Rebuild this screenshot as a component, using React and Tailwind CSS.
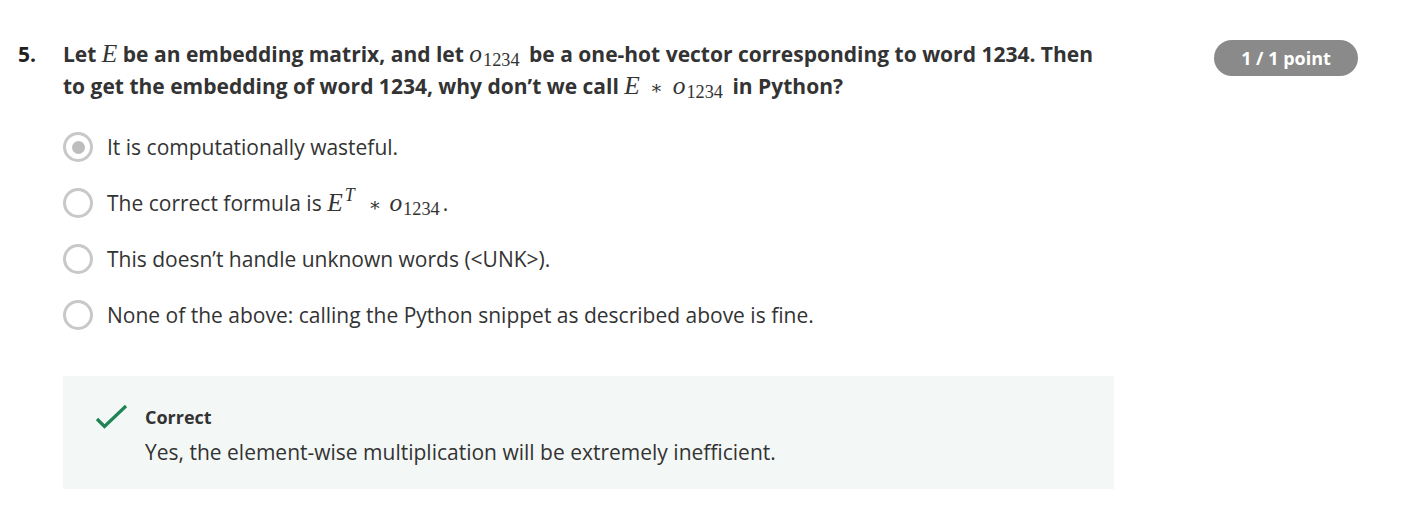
import React from 'react';

const MathO = ({ className = '' }) => (
    <span className={`inline-block whitespace-nowrap font-['Liberation_Serif',serif] text-[1.21em] font-normal leading-none ${className}`}>
        <span className="italic">o</span>
        <span className="inline-block align-[-0.22em] pl-[1px] text-[0.72em]">1234</span>
    </span>
);

const MathE = ({ sup, className = '' }) => (
    <span className={`inline-block font-['Liberation_Serif',serif] text-[1.21em] font-normal italic leading-none ${className}`}>
        E{sup && <span className="inline-block align-[0.55em] pl-[2px] text-[0.7em]">{sup}</span>}
    </span>
);

const Star = ({ className }) => (
    <span className={`inline-block font-['DejaVu_Serif',serif] text-[0.9em] font-normal leading-none ${className}`}>∗</span>
);

const Radio = ({ checked }) => (
    <span className="flex h-[30px] w-[30px] shrink-0 items-center justify-center rounded-full border-[3px] border-[#c8c8c8] bg-white">
        {checked && <span className="h-[13px] w-[13px] rounded-full bg-[#bdbdbd]"></span>}
    </span>
);

const options = [
    { id: 1, checked: true, content: <>It is computationally wasteful.</> },
    {
        id: 2,
        content: (
            <>
                The correct formula is <MathE sup="T" />
                <Star className="ml-[14px] mr-[8px]" />
                <MathO />
                <span className="ml-[3px]">.</span>
            </>
        ),
    },
    { id: 3, content: <>This doesn’t handle unknown words (&lt;UNK&gt;).</> },
    { id: 4, content: <>None of the above: calling the Python snippet as described above is fine.</> },
];

export default function App() {
    return (
        <div className="min-h-screen bg-white font-['Open_Sans',sans-serif] text-[#1f1f1f]">
            <div className="flex pt-[38px] pr-[56px]">
                <div className="w-[63px] shrink-0 pl-[18px] text-[21px] font-bold leading-[32px]">5.</div>

                <div className="w-[1051px] shrink-0">
                    <h2 className="text-[21px] font-bold leading-[32px] text-[#333]">
                        Let <MathE /> be an embedding matrix, and let <MathO className="mr-[4px]" /> be a one-hot vector corresponding to word 1234. Then
                        to get the embedding of word 1234, why don’t we call <MathE />
                        <Star className="mx-[10px]" />
                        <MathO className="mr-[4px]" /> in Python?
                    </h2>

                    {/* opciones */}
                    <div className="mt-[30px] flex flex-col gap-[26px]">
                        {options.map((opt) => (
                            <label key={opt.id} className="flex h-[30px] items-center gap-[14px]">
                                <Radio checked={opt.checked} />
                                <span className="text-[21px] leading-[30px] text-[#333]">{opt.content}</span>
                            </label>
                        ))}
                    </div>

                    <div className="mt-[46px] flex gap-[17px] bg-[#f3f8f6] pl-[32px] pt-[26px] pb-[22px]">
                        <svg className="mt-[2px] h-[26px] w-[33px] shrink-0" viewBox="0 0 33 26" fill="none">
                            <path d="M2 15 L9.5 22.5 L31 2" stroke="#1f8354" strokeWidth="3.2" />
                        </svg>
                        <div>
                            <div className="text-[18px] font-bold leading-[30px] text-[#333]">Correct</div>
                            <div className="mt-[5px] text-[21px] leading-[30px] text-[#333]">
                                Yes, the element-wise multiplication will be extremely inefficient.
                            </div>
                        </div>
                    </div>
                </div>

                <div className="flex flex-1 justify-end pt-[2px]">
                    <span className="flex h-[36px] w-[144px] items-center justify-center rounded-full bg-[#8a8a8a] text-[18px] font-bold text-white">
                        1 / 1 point
                    </span>
                </div>
            </div>
        </div>
    );
}
